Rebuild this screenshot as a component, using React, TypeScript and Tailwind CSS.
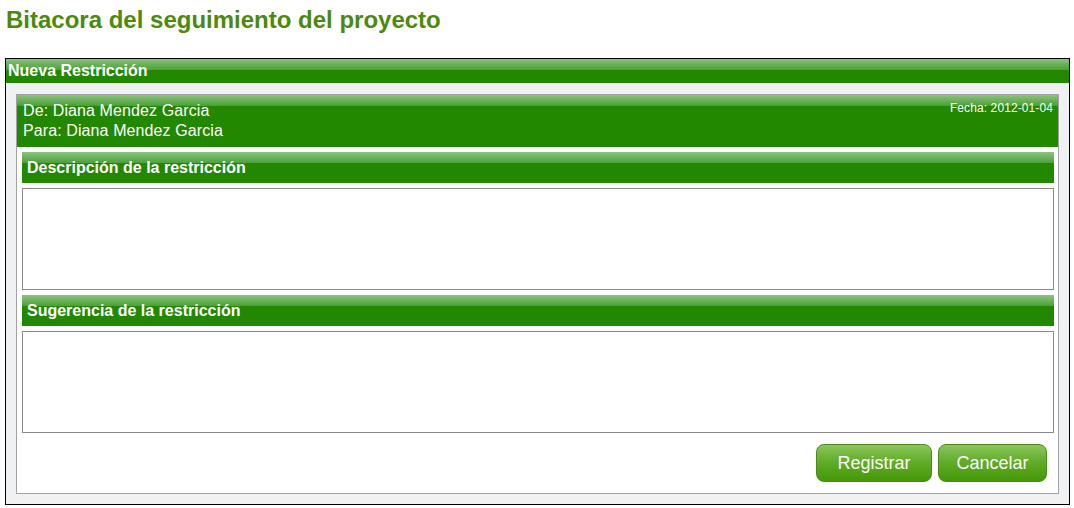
import React from 'react';

function SectionHeader({ title }: { title: string }) {
  return (
    <div className="h-[31px] bg-[linear-gradient(to_bottom,#8ac47c_0%,#6cb25c_18%,#4ea23c_34%,#228800_36%,#228800_100%)] pl-[5px] text-[16px] leading-[31px] font-bold text-white">
      {title}
    </div>
  );
}

export default function App() {
  return (
    <div className="min-h-[508px] bg-white font-['Liberation_Sans',Arial,sans-serif] pt-[7px]">
      <h1 className="ml-[6px] h-[26px] text-[24px] leading-[26px] font-bold text-[#4b8a0c]">
        Bitacora del seguimiento del proyecto
      </h1>

      <div className="ml-[5px] mt-[25px] w-[1065px] border border-black bg-[#f0f1f3]">
        <div className="h-[24px] bg-[linear-gradient(to_bottom,#8ac47c_0%,#6cb25c_20%,#4ea23c_44%,#228800_46%,#228800_100%)] pl-[2px] text-[16px] leading-[24px] font-bold text-white">
          Nueva Restricción
        </div>

        <div className="px-[10px] pt-[11px] pb-[10px]">
          <div className="border border-[#a2a2a2] bg-white">
            {/* Cabecera con remitente y fecha */}
            <div className="flex h-[52px] justify-between bg-[linear-gradient(to_bottom,#8ac47c_0%,#6cb25c_10%,#4ea23c_20%,#228800_22%,#228800_100%)] text-white">
              <div className="pl-[6px] pt-[6px] text-[16px] leading-[20px] tracking-[0.1px]">
                <div>De: Diana Mendez Garcia</div>
                <div>Para: Diana Mendez Garcia</div>
              </div>
              <div className="pr-[5px] pt-[6px] text-[12px] leading-[14px] tracking-[0.1px]">Fecha: 2012-01-04</div>
            </div>

            <div className="pl-[5px] pr-[4px] pt-[5px] pb-[11px]">
              <SectionHeader title="Descripción de la restricción" />
              <textarea className="mt-[5px] block h-[102px] w-full resize-none border border-[#8a8a8a] bg-white outline-none" />
              <div className="mt-[5px]">
                <SectionHeader title="Sugerencia de la restricción" />
              </div>
              <textarea className="mt-[5px] block h-[102px] w-full resize-none border border-[#8a8a8a] bg-white outline-none" />

              <div className="mt-[11px] flex justify-end gap-[6px] pr-[7px]">
                <button className="h-[38px] w-[116px] rounded-[8px] border border-[#4a8c1a] bg-[linear-gradient(to_bottom,#8cc65c_0%,#62ad2a_45%,#449806_100%)] text-[18px] text-white">
                  Registrar
                </button>
                <button className="h-[38px] w-[109px] rounded-[8px] border border-[#4a8c1a] bg-[linear-gradient(to_bottom,#8cc65c_0%,#62ad2a_45%,#449806_100%)] text-[18px] text-white">
                  Cancelar
                </button>
              </div>
            </div>
          </div>
        </div>
      </div>
    </div>
  );
}
